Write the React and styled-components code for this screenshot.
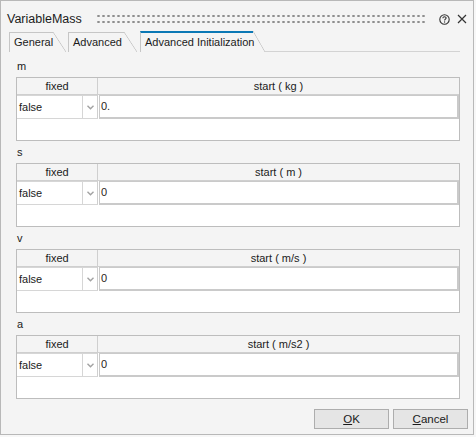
import React from 'react';
import styled, { createGlobalStyle, css } from 'styled-components';

const GlobalStyle = createGlobalStyle`
  html, body {
    margin: 0;
    padding: 0;
    background: #f7f7f7;
  }
  body {
    font-family: 'Liberation Sans', Arial, sans-serif;
    color: #1b1b1b;
  }
`;

// --- DIALOG FRAME --- //
const Window = styled.div`
  width: 474px;
  height: 435px;
  box-sizing: border-box;
  border: 1px solid #b8b8b8;
  background: #f4f4f4;
  display: flex;
  flex-direction: column;
`;

const TitleBar = styled.div`
  height: 30px;
  box-sizing: border-box;
  padding: 6px 6px 0 6px;
  display: flex;
  align-items: center;
`;

const Title = styled.span`
  font-size: 12.5px;
  line-height: 24px;
  white-space: nowrap;
`;

const Grip = styled.div`
  flex: 1;
  height: 12px;
  margin: 0 12px 0 14px;
  background-image: radial-gradient(circle, #8e8e8e 1px, transparent 1.4px);
  background-size: 5px 6px;
  background-position: 0 0;
`;

const TitleIcon = styled.svg`
  display: block;
  flex: none;
  margin-left: ${p => p.$gap || 0}px;
`;

// --- TABS --- //
const TabRow = styled.div`
  height: 21px;
  display: flex;
  align-items: flex-end;
  padding-left: 8px;
`;

const Tab = styled.div`
  position: relative;
  width: ${p => p.$w}px;
  margin-right: ${p => p.$mr}px;
  box-sizing: border-box;
  height: 20px;
  padding-left: 4px;
  border-left: 1px solid #c6c6c6;
  border-top: 1px solid #c6c6c6;
  font-size: 11px;
  line-height: 19px;
  white-space: nowrap;

  &::after {
    content: '';
    position: absolute;
    left: 100%;
    top: -1px;
    width: ${p => p.$slant}px;
    height: 20px;
    background: linear-gradient(
      to top right,
      transparent calc(50% - 0.7px),
      #c6c6c6 50%,
      transparent calc(50% + 0.7px)
    );
  }

  ${p =>
    p.$active &&
    css`
      height: 21px;
      border-top: 2px solid #0b78b5;
      &::after {
        top: -2px;
        height: 21px;
      }
    `}
`;

const TabLine = styled.div`
  flex: 1;
  align-self: stretch;
  margin-left: 12px;
  margin-right: 13px;
  border-bottom: 1px solid #d3d3d3;
`;

// --- CONTENT --- //
const Panel = styled.div`
  flex: 1;
  display: flex;
  flex-direction: column;
  padding: 7px 13px 0 15px;
`;

const Section = styled.div`
  display: flex;
  flex-direction: column;
  margin-bottom: 4px;
`;

const Label = styled.div`
  font-size: 11px;
  line-height: 14px;
  height: 14px;
  margin-bottom: 4px;
  padding-left: 1px;
`;

const Grid = styled.div`
  height: 64px;
  box-sizing: border-box;
  border: 1px solid #bdbdbd;
  background: #fff;
  display: grid;
  grid-template-columns: 81px 1fr;
  grid-template-rows: 17px 24px 1fr;
`;

const HeadCell = styled.div`
  background: #f4f4f4;
  border-bottom: 1px solid #cfcfcf;
  border-right: ${p => (p.$last ? 'none' : '1px solid #cfcfcf')};
  font-size: 11px;
  line-height: 17px;
  text-align: center;
  white-space: pre;
`;

const ComboCell = styled.div`
  display: flex;
  border-right: 1px solid #cfcfcf;
  border-bottom: 1px solid #d6d6d6;
`;

const ComboValue = styled.div`
  flex: 1;
  border-right: 1px solid #d6d6d6;
  border-top: 1px solid #d6d6d6;
  padding-left: 2px;
  font-size: 11px;
  line-height: 22px;
`;

const ComboArrow = styled.div`
  width: 14px;
  border-top: 1px solid #d6d6d6;
  display: flex;
  align-items: center;
  justify-content: center;
`;

const ValueInput = styled.div`
  margin-left: 1px;
  border: 1px solid #cacaca;
  border-right-width: 2px;
  border-bottom-width: 2px;
  padding-left: 1px;
  font-size: 11px;
  line-height: 21px;
  color: #2a2420;
`;

const EmptyRow = styled.div`
  grid-column: 1 / -1;
`;

// --- FOOTER --- //
const Footer = styled.div`
  display: flex;
  justify-content: flex-end;
  gap: 4px;
  padding: 6px 5px 0 0;
  height: 31px;
  box-sizing: border-box;
`;

const Button = styled.button`
  width: 75px;
  height: 20px;
  padding: 0;
  border: 1px solid #adadad;
  background: #e5e5e5;
  font-family: inherit;
  font-size: 11.5px;
  color: #1b1b1b;
`;

const sections = [
  { name: 'm', unit: 'kg', value: '0.' },
  { name: 's', unit: 'm', value: '0' },
  { name: 'v', unit: 'm/s', value: '0' },
  { name: 'a', unit: 'm/s2', value: '0' },
];

const Chevron = () => (
  <svg width="7" height="5" viewBox="0 0 7 5">
    <path d="M0.5 0.8 L3.5 3.8 L6.5 0.8" fill="none" stroke="#a2a2a2" strokeWidth="1.4" />
  </svg>
);

const StartTable = ({ name, unit, value }) => (
  <Section>
    <Label>{name}</Label>
    <Grid>
      <HeadCell>fixed</HeadCell>
      <HeadCell $last>{`start ( ${unit} )`}</HeadCell>
      <ComboCell>
        <ComboValue>false</ComboValue>
        <ComboArrow>
          <Chevron />
        </ComboArrow>
      </ComboCell>
      <ValueInput>{value}</ValueInput>
      <EmptyRow />
    </Grid>
  </Section>
);

export default function App() {
  return (
    <>
      <GlobalStyle />
      <Window>
        <TitleBar>
          <Title>VariableMass</Title>
          <Grip />
          <TitleIcon width="11" height="11" viewBox="0 0 11 11">
            <circle cx="5.5" cy="5.5" r="4.7" fill="none" stroke="#333" strokeWidth="1.1" />
            <path
              d="M3.9 4.3 C3.9 3.3 4.6 2.8 5.5 2.8 C6.4 2.8 7.1 3.3 7.1 4.1 C7.1 5 5.6 5.2 5.6 6.4"
              fill="none"
              stroke="#333"
              strokeWidth="1.1"
            />
            <circle cx="5.6" cy="8" r="0.65" fill="#333" />
          </TitleIcon>
          <TitleIcon $gap={7} width="10" height="10" viewBox="0 0 10 10">
            <path d="M1 1 L9 9 M9 1 L1 9" stroke="#333" strokeWidth="1.2" />
          </TitleIcon>
        </TitleBar>
        <TabRow>
          <Tab $w={44} $mr={15} $slant={13}>General</Tab>
          <Tab $w={56} $mr={16} $slant={13}>Advanced</Tab>
          <Tab $w={113} $mr={0} $slant={12} $active>
            Advanced Initialization
          </Tab>
          <TabLine />
        </TabRow>
        <Panel>
          {sections.map(s => (
            <StartTable key={s.name} {...s} />
          ))}
        </Panel>
        <Footer>
          <Button>
            <u>O</u>K
          </Button>
          <Button>
            <u>C</u>ancel
          </Button>
        </Footer>
      </Window>
    </>
  );
}
